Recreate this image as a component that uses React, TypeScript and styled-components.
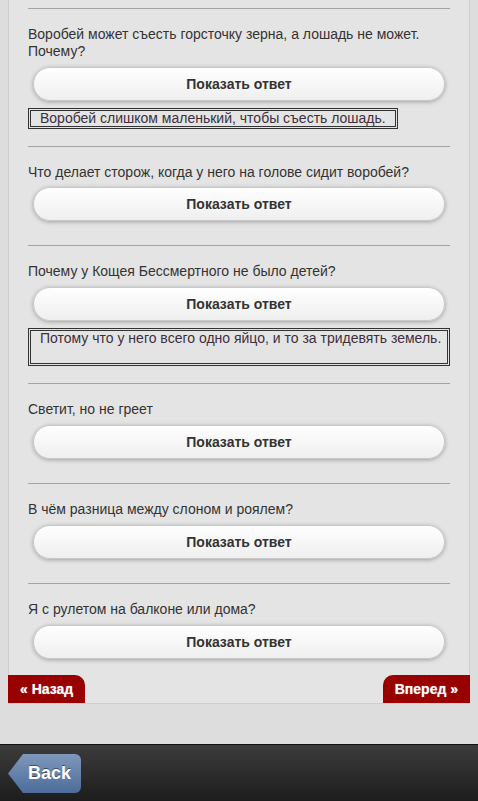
import styled, { createGlobalStyle } from 'styled-components';

const GlobalStyle = createGlobalStyle`
  html, body {
    margin: 0;
    padding: 0;
    background: #dddddd;
    font-family: "Liberation Sans", Arial, sans-serif;
  }
`;

interface Riddle {
  question: string;
  answer?: string;
  tall?: boolean;
}

const riddles: Riddle[] = [
  {
    question: 'Воробей может съесть горсточку зерна, а лошадь не может. Почему?',
    answer: 'Воробей слишком маленький, чтобы съесть лошадь.',
  },
  { question: 'Что делает сторож, когда у него на голове сидит воробей?' },
  {
    question: 'Почему у Кощея Бессмертного не было детей?',
    answer: 'Потому что у него всего одно яйцо, и то за тридевять земель.',
    tall: true,
  },
  { question: 'Светит, но не греет' },
  { question: 'В чём разница между слоном и роялем?' },
  { question: 'Я с рулетом на балконе или дома?' },
];

const Page = styled.div`
  display: flex;
  flex-direction: column;
  min-height: 801px;
`;

const Wrapper = styled.div`
  margin: 0 8px;
`;

const Panel = styled.div`
  background: #e4e4e4;
  border-left: 1px solid #cfcfcf;
  border-right: 1px solid #cfcfcf;
  padding: 8px 19px 0;
`;

const Item = styled.div`
  display: flex;
  flex-direction: column;
  align-items: flex-start;
  border-top: 1px solid #a3a3a3;
  padding: 17px 0 17px;

  &:last-child {
    padding-bottom: 9px;
  }
`;

const Question = styled.p`
  margin: 0;
  font-size: 14px;
  line-height: 1.2;
  color: #333;
`;

const ShowButton = styled.button`
  align-self: stretch;
  margin: 7px 5px;
  height: 34px;
  border: 1px solid #c8c8c8;
  border-radius: 17px;
  background: linear-gradient(#ffffff, #efefef);
  box-shadow: 0 1px 4px rgba(0, 0, 0, 0.3);
  font-family: "Liberation Sans", Arial, sans-serif;
  font-size: 14px;
  font-weight: bold;
  color: #333;
  cursor: pointer;
  padding: 0;
`;

const Answer = styled.div<{ $tall?: boolean }>`
  display: ${({ $tall }) => ($tall ? 'block' : 'inline-block')};
  align-self: ${({ $tall }) => ($tall ? 'stretch' : 'flex-start')};
  border: 3px double #333;
  padding: 0 9px;
  font-size: 14px;
  line-height: 15px;
  min-height: ${({ $tall }) => ($tall ? '32px' : '15px')};
  color: #3d2f3d;
  white-space: nowrap;
`;

const Nav = styled.div`
  display: flex;
  justify-content: space-between;
  border-bottom: 1px solid #cfcfcf;
  background: #e4e4e4;
`;

const NavTab = styled.a<{ $side: 'left' | 'right' }>`
  display: flex;
  align-items: center;
  height: 28px;
  padding: 0 12px;
  background: #990000;
  color: #fff;
  font-size: 14px;
  font-weight: bold;
  text-decoration: none;
  border-top-right-radius: ${({ $side }) => ($side === 'left' ? '10px' : '0')};
  border-top-left-radius: ${({ $side }) => ($side === 'right' ? '10px' : '0')};
  text-shadow: 0 0 1px rgba(255, 255, 255, 0.6);
  cursor: pointer;
`;

const Spacer = styled.div`
  flex: 1;
  min-height: 40px;
`;

const Footer = styled.div`
  height: 57px;
  border-top: 1px solid #111;
  background: linear-gradient(#3c3c3c, #1c1c1c);
  display: flex;
  align-items: center;
  padding: 0 8px;
`;

const BackButton = styled.button`
  width: 73px;
  height: 39px;
  margin-top: 1px;
  border: none;
  border-radius: 0 6px 6px 0;
  clip-path: polygon(0 50%, 15px 0, 100% 0, 100% 100%, 15px 100%);
  background: linear-gradient(#7f98bb, #4d6c9a);
  color: #fff;
  font-family: "Liberation Sans", Arial, sans-serif;
  font-size: 18px;
  font-weight: bold;
  padding: 0 0 0 10px;
  text-shadow: 0 -1px 0 rgba(0, 0, 0, 0.45);
  cursor: pointer;
`;

export default function App() {
  return (
    <Page>
      <GlobalStyle />
      <Wrapper>
        <Panel>
          {riddles.map((r) => (
            <Item key={r.question}>
              <Question>{r.question}</Question>
              <ShowButton>Показать ответ</ShowButton>
              {r.answer && <Answer $tall={r.tall}>{r.answer}</Answer>}
            </Item>
          ))}
        </Panel>
        <Nav>
          <NavTab $side="left">« Назад</NavTab>
          <NavTab $side="right">Вперед »</NavTab>
        </Nav>
      </Wrapper>
      <Spacer />
      <Footer>
        <BackButton>Back</BackButton>
      </Footer>
    </Page>
  );
}
